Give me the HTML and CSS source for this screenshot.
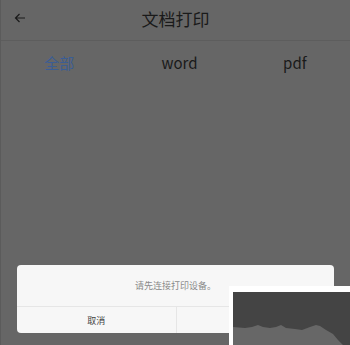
FILE: index.html
```html
<!DOCTYPE html>
<html lang="zh-CN">
<head>
    <meta charset="UTF-8">
    <meta name="viewport" content="width=device-width, initial-scale=1.0">
    <title>文档打印</title>
    <link rel="stylesheet" href="styles.css">
</head>
<body>
    <div class="screen">
        <header class="topbar">
            <a class="back" href="#">
                <svg width="12" height="12" viewBox="0 0 12 12">
                    <path d="M11 6H1.5M5.5 2L1.5 6l4 4" fill="none" stroke="#1a1a1a" stroke-width="1.2"/>
                </svg>
            </a>
            <h1>文档打印</h1>
        </header>

        <nav class="tabs">
            <a href="#" class="active">全部</a>
            <a href="#">word</a>
            <a href="#">pdf</a>
        </nav>

        <div class="spacer"></div>

        <div class="dialog">
            <div class="dialog-msg">请先连接打印设备。</div>
            <div class="dialog-actions">
                <button>取消</button>
                <button>确定</button>
            </div>
        </div>

        <div class="watermark">
            <svg width="117" height="53" viewBox="0 0 117 53">
                <rect width="117" height="53" fill="#444"/>
                <path d="M0 35L12 36L19 35L25 33L30 35L37 36L43 35L48 33L53 36L62 37L69 38L77 35L83 33L87 34L93 38L100 42L105 48L110 53L0 53Z" fill="#676767"/>
            </svg>
        </div>
    </div>
</body>
</html>
```

FILE: styles.css
```css
:root {
    --dim-bg: #666666;
    --line: #5d5d5d;
    --text-dark: #1a1a1a;
    --blue-dim: #3b5d94;
}

* {
    margin: 0;
    padding: 0;
    box-sizing: border-box;
}

body {
    font-family: "Noto Sans CJK SC", "Noto Sans", sans-serif;
    background: var(--dim-bg);
}

.screen {
    position: relative;
    width: 350px;
    height: 345px;
    display: flex;
    flex-direction: column;
    background: var(--dim-bg);
    border-left: 1px solid #5b5b5b;
    overflow: hidden;
}

.topbar {
    height: 41px;
    display: flex;
    align-items: center;
    justify-content: center;
    position: relative;
    border-bottom: 1px solid var(--line);
}

.back {
    position: absolute;
    left: 13px;
    top: 12px;
    display: flex;
}

.topbar h1 {
    font-size: 17px;
    font-weight: 400;
    color: var(--text-dark);
    line-height: 1;
    margin-top: -4px;
}

.tabs {
    display: grid;
    grid-template-columns: 1fr 1fr 1fr;
    height: 44px;
    align-items: center;
}

.tabs a {
    text-align: center;
    font-size: 15px;
    color: var(--text-dark);
    text-decoration: none;
    line-height: 1;
    margin-top: -1px;
}

.tabs a:nth-child(2) {
    padding-left: 8px;
}

.tabs a:nth-child(3) {
    padding-left: 6px;
}

.tabs a.active {
    color: var(--blue-dim);
}

.spacer {
    flex: 1;
}

.dialog {
    margin: 0 16px 12px 16px;
    background: #f7f7f7;
    border-radius: 4px;
}

.dialog-msg {
    height: 42px;
    display: flex;
    align-items: center;
    justify-content: center;
    font-size: 9px;
    color: #8a8a8a;
    border-bottom: 1px solid #e6e6e6;
}

.dialog-actions {
    display: grid;
    grid-template-columns: 1fr 1fr;
    height: 26px;
}

.dialog-actions button {
    background: none;
    border: none;
    font-family: inherit;
    font-size: 9px;
    color: #444;
}

.dialog-actions button + button {
    border-left: 1px solid #e6e6e6;
}

.watermark {
    position: absolute;
    left: 228px;
    top: 286px;
    width: 122px;
    height: 59px;
    background: #ffffff;
    padding: 6px 0 0 4px;
}

.watermark svg {
    display: block;
}
```
